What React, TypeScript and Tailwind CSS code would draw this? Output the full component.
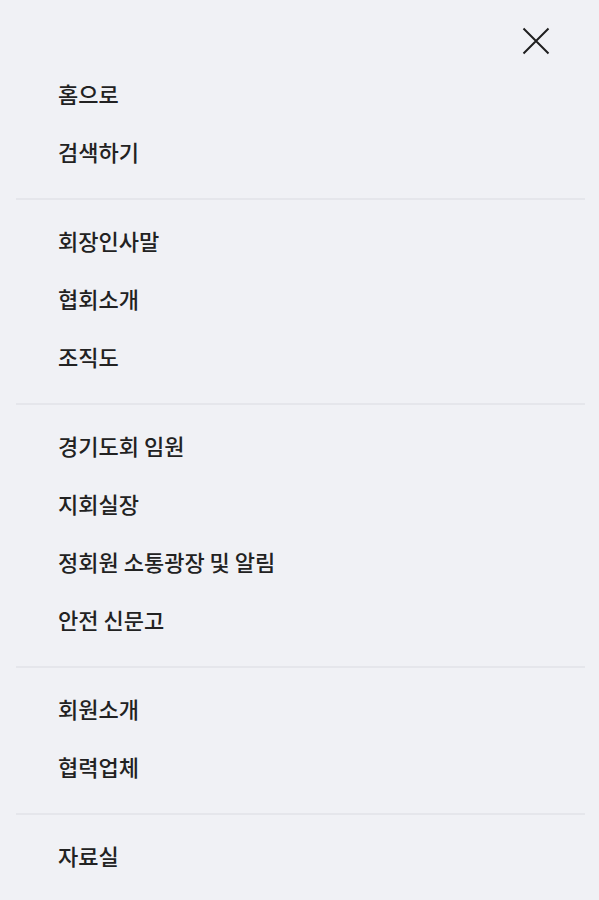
import React from "react";

const groups: string[][] = [
  ["홈으로", "검색하기"],
  ["회장인사말", "협회소개", "조직도"],
  ["경기도회 임원", "지회실장", "정회원 소통광장 및 알림", "안전 신문고"],
  ["회원소개", "협력업체"],
  ["자료실"],
];

export default function App() {
  return (
    <div
      className="w-[599px] h-[900px] bg-[#f0f1f5] overflow-hidden"
      style={{ fontFamily: '"Noto Sans CJK KR", "Noto Sans", sans-serif' }}
    >
      <div className="h-[66px] flex justify-end items-start pr-[49px] pt-[27px]">
        <button aria-label="닫기" className="w-[28px] h-[28px] flex items-center justify-center">
          <svg width="28" height="28" viewBox="0 0 28 28" fill="none">
            <path d="M1.5 1.5L26.5 26.5M26.5 1.5L1.5 26.5" stroke="#1f1f1f" strokeWidth="2" />
          </svg>
        </button>
      </div>
      {groups.map((g, i) => (
        <div key={i}>
          <div className={i === 0 ? "pt-0 pb-[16px]" : "pt-[13px] pb-[16px]"}>
            {g.map((t) => (
              <div
                key={t}
                className="h-[58px] flex items-center pl-[58px] pb-[3px] text-[22px] font-medium text-[#222222]"
              >
                {t}
              </div>
            ))}
          </div>
          {i < groups.length - 1 && <div className="ml-[16px] mr-[14px] h-[2px] bg-[#e5e6eb]" />}
        </div>
      ))}
    </div>
  );
}
